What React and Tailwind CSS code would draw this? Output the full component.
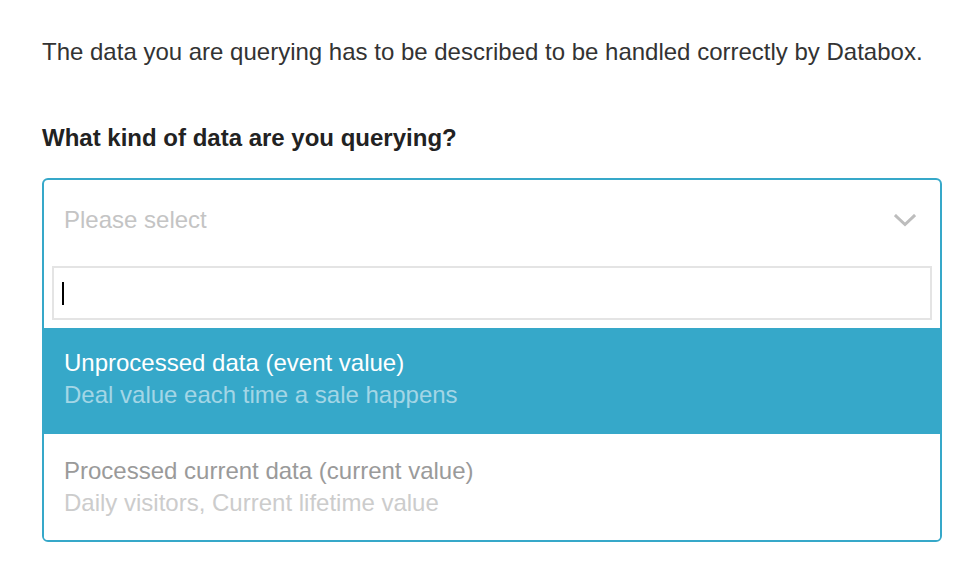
import React from "react";

export default function App() {
  return (
    <div className="w-[976px] h-[580px] bg-white pl-[42px] pt-[38px] font-['Liberation_Sans',Arial,sans-serif]">
      <p className="text-[24px] leading-[28px] text-[#333333] whitespace-nowrap">
        The data you are querying has to be described to be handled correctly by Databox.
      </p>
      <h2 className="mt-[58px] text-[24px] leading-[28px] font-bold text-[#222222]">
        What kind of data are you querying?
      </h2>
      <div className="mt-[26px] w-[900px] border-2 border-[#36a8c9] rounded-[6px] overflow-hidden">
        <div className="h-[80px] flex items-center justify-between pl-[20px] pr-[24px]">
          <span className="text-[24px] text-[#c4c4c4]">Please select</span>
          <svg width="22" height="13" viewBox="0 0 22 13" fill="none">
            <path d="M2 2 L11 10.5 L20 2" stroke="#bdbdbd" strokeWidth="3" strokeLinecap="square" strokeLinejoin="miter" />
          </svg>
        </div>
        <div className="pt-[6px] px-[8px] pb-[8px]">
          <div className="h-[54px] border-2 border-[#e4e4e4] flex items-center pl-[8px]">
            <div className="w-[2px] h-[23px] bg-black" />
          </div>
        </div>
        <div className="h-[106px] bg-[#36a8c9] pl-[20px] pt-[19px]">
          <div className="text-[24px] leading-[32px] text-white">Unprocessed data (event value)</div>
          <div className="text-[24px] leading-[32px] text-[#a3d6e6]">Deal value each time a sale happens</div>
        </div>
        <div className="h-[106px] bg-white pl-[20px] pt-[21px]">
          <div className="text-[24px] leading-[32px] text-[#9a9a9a]">Processed current data (current value)</div>
          <div className="text-[24px] leading-[32px] text-[#cccccc]">Daily visitors, Current lifetime value</div>
        </div>
      </div>
    </div>
  );
}
